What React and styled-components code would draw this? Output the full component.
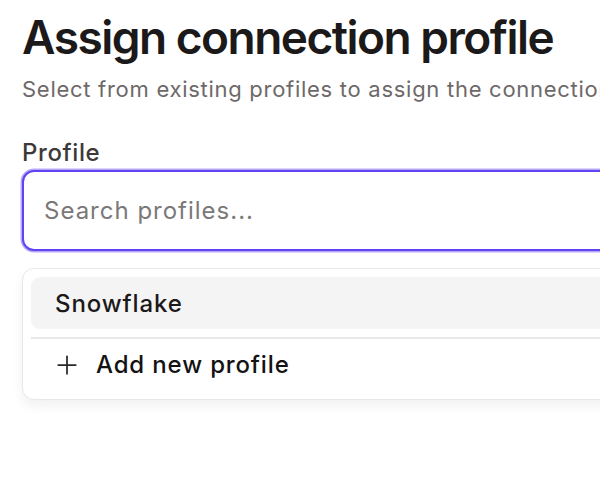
import React from 'react';
import styled, { createGlobalStyle } from 'styled-components';
import { Plus } from 'lucide-react';

const Global = createGlobalStyle`
  *{
    margin: 0;
    padding: 0;
    box-sizing: border-box;
  }
  body{
    background: #ffffff;
    font-family: Inter, "Noto Sans", sans-serif;
    overflow: hidden;
  }
`;

export default function App() {
  const profiles = ['Snowflake'];
  return (
    <Page>
      <Global />
      <Dialog>
        <Title>Assign connection profile</Title>
        <Subtitle>Select from existing profiles to assign the connection to, or add a new one.</Subtitle>
        <Field>
          <Label>Profile</Label>
          <Search placeholder="Search profiles..." />
        </Field>
        <Menu>
          {profiles.map((p) => (
            <Item key={p} active>{p}</Item>
          ))}
          <Divider />
          <AddRow>
            <Plus size={30} strokeWidth={1.4} />
            <span>Add new profile</span>
          </AddRow>
        </Menu>
      </Dialog>
    </Page>
  );
}

const Page = styled.div`
  width: 600px;
  height: 490px;
  overflow: hidden;
  padding: 10px 0 0 22px;
`;

const Dialog = styled.div`
  width: 820px;
  display: flex;
  flex-direction: column;
`;

const Title = styled.h1`
  font-size: 46px;
  line-height: 55.2px;
  font-weight: 600;
  color: #1b1919;
  letter-spacing: -1.5px;
  white-space: nowrap;
`;

const Subtitle = styled.p`
  margin-top: 8.5px;
  font-size: 22px;
  line-height: 30.8px;
  letter-spacing: 0.72px;
  color: #6e6969;
  white-space: nowrap;
`;

const Field = styled.div`
  margin-top: 31px;
  display: flex;
  flex-direction: column;
  gap: 1px;
`;

const Label = styled.label`
  font-size: 24px;
  line-height: 33.6px;
  font-weight: 500;
  letter-spacing: 0.6px;
  color: #3d3939;
`;

const Search = styled.input`
  height: 81px;
  border: 2.5px solid #6342f2;
  border-radius: 12px;
  box-shadow: 0 0 0 1.5px rgba(120, 95, 245, 0.55);
  padding: 0 20px;
  font-family: Inter, "Noto Sans", sans-serif;
  font-size: 24px;
  letter-spacing: 1px;
  color: #1b1919;
  outline: none;
  &::placeholder{
    color: #7b7878;
  }
`;

const Menu = styled.div`
  margin-top: 17px;
  border: 1px solid #e8e8e8;
  border-radius: 12px;
  padding: 8px;
  display: flex;
  flex-direction: column;
  box-shadow: 0 6px 12px rgba(0, 0, 0, 0.06);
  background: #ffffff;
`;

const Item = styled.div`
  height: 52px;
  display: flex;
  align-items: center;
  padding-left: 24px;
  border-radius: 9px;
  font-size: 24px;
  font-weight: 500;
  letter-spacing: 0.9px;
  color: #1b1919;
  background: ${(p) => (p.active ? '#f4f4f4' : 'transparent')};
`;

const Divider = styled.div`
  height: 1.5px;
  background: #e8e8e8;
  margin-top: 8px;
`;

const AddRow = styled.div`
  height: 52px;
  display: flex;
  align-items: center;
  gap: 14px;
  padding-left: 21px;
  font-size: 24px;
  font-weight: 500;
  letter-spacing: 0.85px;
  color: #141212;
  svg{
    color: #2a2828;
  }
`;
